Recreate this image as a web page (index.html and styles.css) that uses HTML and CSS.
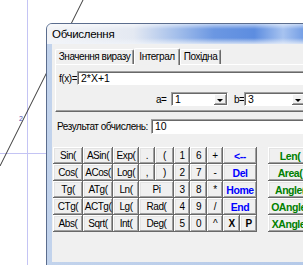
FILE: index.html
```html
<!DOCTYPE html>
<html lang="uk">
<head>
    <meta charset="UTF-8">
    <title>Обчислення</title>
    <link rel="stylesheet" href="styles.css">
</head>
<body>
    <svg class="graph" width="303" height="265" viewBox="0 0 303 265">
        <line x1="27.5" y1="0" x2="27.5" y2="265" stroke="#c4c4f4" stroke-width="1"/>
        <line x1="0" y1="153.5" x2="60" y2="153.5" stroke="#c4c4f4" stroke-width="1"/>
        <line x1="83" y1="0" x2="0" y2="166" stroke="#222" stroke-width="0.9"/>
        <text x="19" y="121" class="axis-label">2</text>
    </svg>

    <div class="window">
        <div class="titlebar"><span class="title">Обчислення</span></div>
        <div class="client">
            <div class="tabs">
                <div class="tab tab-value">Значення виразу</div>
                <div class="tab tab-integral active">Інтеграл</div>
                <div class="tab tab-deriv">Похідна</div>
            </div>
            <div class="panel">
                <div class="row fx-row">
                    <span class="lbl fx-lbl">f(x)=</span>
                    <div class="edit fx-edit">2*X+1</div>
                </div>
                <div class="row limits-row">
                    <span class="lbl a-lbl">a=</span>
                    <div class="combo a-combo"><span>1</span><i class="drop"></i></div>
                    <span class="lbl b-lbl">b=</span>
                    <div class="combo b-combo"><span>3</span><i class="drop"></i></div>
                </div>
            </div>

            <div class="row result-row">
                <span class="lbl result-lbl">Результат обчислень:</span>
                <div class="edit result-edit">10</div>
            </div>

            <div class="keypad">
                <div class="keys">
                    <button>Sin(</button>
                    <button>ASin(</button>
                    <button>Exp(</button>
                    <button>.</button>
                    <button>(</button>
                    <button>1</button>
                    <button>6</button>
                    <button>+</button>
                    <button class="nav wide">&lt;--</button>

                    <button>Cos(</button>
                    <button>ACos(</button>
                    <button>Log(</button>
                    <button>,</button>
                    <button>)</button>
                    <button>2</button>
                    <button>7</button>
                    <button>-</button>
                    <button class="nav wide">Del</button>

                    <button>Tg(</button>
                    <button>ATg(</button>
                    <button>Ln(</button>
                    <button class="pair">Pi</button>
                    <button>3</button>
                    <button>8</button>
                    <button>*</button>
                    <button class="nav wide">Home</button>

                    <button>CTg(</button>
                    <button>ACTg(</button>
                    <button>Lg(</button>
                    <button class="pair">Rad(</button>
                    <button>4</button>
                    <button>9</button>
                    <button>/</button>
                    <button class="nav wide">End</button>

                    <button>Abs(</button>
                    <button>Sqrt(</button>
                    <button>Int(</button>
                    <button class="pair">Deg(</button>
                    <button>5</button>
                    <button>0</button>
                    <button>^</button>
                    <button class="strong">X</button>
                    <button class="strong">P</button>
                </div>
                <div class="geo">
                    <button>Len(</button>
                    <button>Area(</button>
                    <button>Angle(</button>
                    <button>OAngle(</button>
                    <button>XAngle(</button>
                </div>
            </div>
        </div>
    </div>
</body>
</html>
```

FILE: styles.css
```css
* {
    margin: 0;
    padding: 0;
    box-sizing: border-box;
}

body {
    position: relative;
    width: 303px;
    height: 265px;
    overflow: hidden;
    background: #fff;
    font-family: "Liberation Sans", Arial, sans-serif;
    font-size: 10px;
    letter-spacing: -0.45px;
    color: #000;
}

.graph {
    position: absolute;
    left: 0;
    top: 0;
}

.axis-label {
    font-family: "Liberation Sans", Arial, sans-serif;
    font-size: 7px;
    fill: #5050b0;
}

/* window on the desktop */
.window {
    position: absolute;
    left: 46px;
    top: 23px;
    width: 290px;
    height: 250px;
    border: 1px solid #5b6d8e;
    border-radius: 6px 6px 0 0;
    background: linear-gradient(to right, #c2d3ec, #b3c8e8);
}

.titlebar {
    height: 20px;
    padding-left: 5px;
    display: flex;
    align-items: center;
    border-radius: 5px 5px 0 0;
    background:
        linear-gradient(to bottom, rgba(255,255,255,0.55) 0, rgba(255,255,255,0) 25%, rgba(255,255,255,0) 70%, rgba(240,244,250,0.8) 100%),
        linear-gradient(to right, #f3f4f7 0, #e4e9f2 30%, #a4bfeb 45%, #6b97e2 58%, #5d8de0 72%, #a7c3f0 82%, #5f8fe1 92%, #5a8be0 100%);
}

.title {
    font-size: 11.5px;
    letter-spacing: -0.3px;
    color: #000;
}

.client {
    margin-left: 5px;
    height: 218px;
    background: #f0f0f0;
    padding-top: 3px;
}

/* tab control */
.tabs {
    display: flex;
    align-items: flex-end;
    height: 17px;
    margin-left: 3px;
}

.tab {
    height: 15px;
    line-height: 14px;
    text-align: center;
    white-space: nowrap;
    border-top: 1px solid #fff;
    border-left: 1px solid #fff;
    border-right: 1px solid #696969;
    box-shadow: inset -1px 0 #a0a0a0;
    border-radius: 2px 2px 0 0;
    background: #f0f0f0;
}

.tab-value { width: 79px; }
.tab-integral { width: 46px; }
.tab-deriv { width: 41px; }

.tab.active {
    height: 17px;
    line-height: 15px;
    position: relative;
    margin-bottom: -1px;
    z-index: 1;
}

.panel {
    margin-left: 3px;
    width: 270px;
    height: 48px;
    border-top: 1px solid #fff;
    border-left: 1px solid #fff;
    border-bottom: 1px solid #696969;
    box-shadow: inset 0 -1px #a0a0a0;
    padding: 6px 0 0 2px;
}

.row {
    display: flex;
    align-items: center;
}

.lbl {
    white-space: nowrap;
}

.edit {
    height: 14px;
    line-height: 12px;
    background: #fff;
    border: 1px solid;
    border-color: #a0a0a0 #fff #fff #a0a0a0;
    box-shadow: inset 1px 1px #696969;
    padding-left: 3px;
    white-space: nowrap;
    font-size: 10.5px;
    letter-spacing: 0;
}

.fx-row { height: 14px; }
.fx-lbl { width: 18px; margin-left: 1px; }
.fx-edit { width: 246px; }

.limits-row {
    height: 14px;
    margin-top: 7px;
}

.a-lbl { margin-left: 98px; width: 15px; }
.b-lbl { margin-left: 6px; width: 10px; }

.combo {
    position: relative;
    height: 14px;
    line-height: 12px;
    background: #fff;
    border: 1px solid;
    border-color: #a0a0a0 #fff #fff #a0a0a0;
    box-shadow: inset 1px 1px #696969;
    padding-left: 3px;
    font-size: 10.5px;
}

.a-combo { width: 57px; }
.b-combo { width: 62px; }

.drop {
    position: absolute;
    right: 0;
    top: 1px;
    bottom: 0;
    width: 13px;
    background: #f0f0f0;
    box-shadow: inset -1px -1px #696969, inset 1px 1px #fff, inset -2px -2px #a0a0a0;
}

.drop::after {
    content: "";
    position: absolute;
    left: 3px;
    top: 5px;
    border-left: 3px solid transparent;
    border-right: 3px solid transparent;
    border-top: 3px solid #000;
}

.result-row {
    margin-top: 7px;
    height: 15px;
}

.result-lbl { margin-left: 5px; width: 94px; }
.result-edit { width: 170px; height: 15px; line-height: 13px; }

/* buttons */
.keypad {
    display: flex;
    gap: 11px;
    margin-top: 13px;
    margin-left: 1px;
}

.keys {
    display: grid;
    grid-template-columns: 30px 30px 26px 16px 19px 16px 17px 16px 17px 17px;
    grid-auto-rows: 17px;
}

.geo {
    display: grid;
    grid-auto-rows: 17px;
    width: 44px;
}

button {
    font-family: inherit;
    font-size: 10px;
    letter-spacing: -0.45px;
    color: #000;
    background: #f0f0f0;
    border: none;
    height: 17px;
    line-height: 16px;
    text-align: center;
    white-space: nowrap;
    overflow: hidden;
    box-shadow: inset -1px -1px #696969, inset 1px 1px #fff, inset -2px -2px #a0a0a0, inset 2px 2px #e3e3e3;
}

.pair { grid-column: span 2; }
.wide { grid-column: span 2; }

.nav {
    color: #0000ff;
    font-weight: bold;
    font-size: 10.5px;
}

.strong {
    font-weight: bold;
}

.geo button {
    color: #008000;
    font-weight: bold;
    font-size: 10.5px;
    text-align: center;
}
```
